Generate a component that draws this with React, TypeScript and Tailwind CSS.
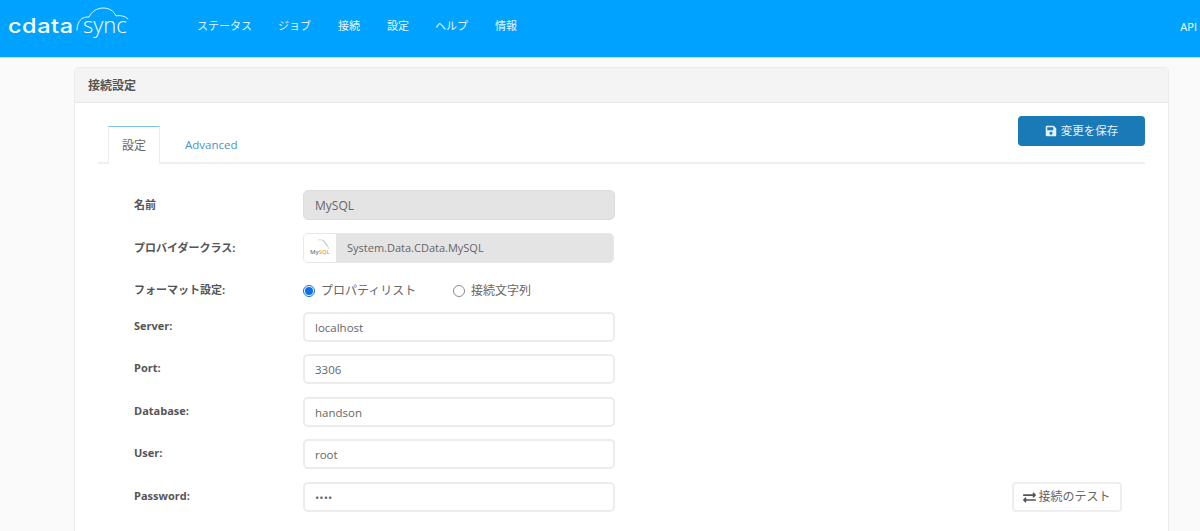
import { FaSave, FaExchangeAlt } from 'react-icons/fa';

const navItems = [
  { label: 'ステータス', w: 'w-[81px]' },
  { label: 'ジョブ', w: 'w-[60px]' },
  { label: '接続', w: 'w-[49px]' },
  { label: '設定', w: 'w-[48px]' },
  { label: 'ヘルプ', w: 'w-[60px]' },
  { label: '情報', w: 'w-[40px]' },
];

const font = 'font-["Open_Sans","Noto_Sans_CJK_JP",sans-serif]';

function Logo() {
  return (
    <div className="relative w-[130px] h-[40px] text-white">
      <span className="absolute left-[8px] top-[6px] text-[20px] leading-[34px] font-medium font-['Inter',sans-serif] tracking-[0.5px] scale-x-[1.17] origin-left">
        cdata
      </span>
      <span className="absolute left-[83px] top-[4px] text-[22px] leading-[34px] font-light font-['Open_Sans',sans-serif]">
        sync
      </span>
      <svg className="absolute left-[74px] top-[4px]" width="56" height="28" viewBox="0 0 56 28" fill="none" stroke="#fff" strokeWidth="1" strokeLinecap="round">
        <path d="M3 23c0-5 2-10 6-12 2-1 4-1 6-1 2-5 8-9 14-9 6 0 11 3 13 8 4-1 9 0 12 3" opacity="0.9" />
      </svg>
    </div>
  );
}

function Row({ label, value, type, className }: { label: string; value: string; type?: string; className?: string }) {
  return (
    <div className={`flex items-center ${className ?? ''}`}>
      <label className="w-[169px] text-[11px] font-bold text-[#555] -mt-[1px]">{label}</label>
      <input
        readOnly
        type={type ?? 'text'}
        value={value}
        className="w-[312px] h-[30px] px-[10px] rounded-[5px] border-2 border-[#ececec] bg-white text-[11.5px] text-[#666] outline-none"
      />
    </div>
  );
}

export default function App() {
  return (
    <div className={`w-[1200px] h-[531px] overflow-hidden bg-[#fafafa] ${font}`}>
      <header className="h-[58px] bg-[#00a2ff] border-b border-[#b5dff7] flex text-white">
        <div className="w-[197px] pt-[3px] shrink-0">
          <Logo />
        </div>
        <nav className="flex pt-[18px] text-[11px] leading-[16px] text-[#e6f6ff]">
          {navItems.map((n) => (
            <a key={n.label} className={n.w}>{n.label}</a>
          ))}
        </nav>
        <span className="ml-auto pt-[19px] pr-[3px] text-[11px] leading-[16px]">API</span>
      </header>

      <section className="ml-[74px] mt-[9px] w-[1095px] border border-[#ebebeb] rounded-t-[4px] bg-white">
        <h2 className="h-[35px] bg-[#f4f4f4] border-b border-[#e6e6e6] px-[13px] text-[12px] leading-[35px] font-bold text-[#555]">
          接続設定
        </h2>

        <div className="px-[23px] pt-[13px] relative">
          <button className="absolute right-[23px] top-[13px] w-[127px] h-[30px] rounded-[4px] bg-[#1a7ab8] text-[#e3f0f8] text-[11.5px] flex items-center justify-center gap-[4px]">
            <FaSave size={12} />
            変更を保存
          </button>

          <div className="flex h-[48px] items-end border-b-2 border-[#f0f0f0]">
            <div className="ml-[10px] w-[52px] h-[38px] -mb-[2px] border border-[#ececec] border-t-[#7cc4f0] border-b-white bg-white text-[12px] leading-[38px] text-center text-[#666]">
              設定
            </div>
            <div className="ml-[25px] h-[36px] text-[11.5px] leading-[38px] text-[#4a93c9]">Advanced</div>
          </div>

          <div className="pl-[36px] pt-[26px] pb-[20px] relative">
            <div className="flex items-center h-[30px]">
              <label className="w-[169px] text-[11px] font-bold text-[#555] mt-[1px]">名前</label>
              <div className="w-[312px] h-[30px] px-[11px] rounded-[5px] border border-[#dcdcdc] bg-[#e4e4e4] text-[12px] leading-[29px] text-[#666]">MySQL</div>
            </div>

            <div className="flex items-center h-[30px] mt-[13px]">
              <label className="w-[169px] text-[11px] font-bold text-[#555]">プロバイダークラス:</label>
              <div className="w-[311px] h-[30px] rounded-[5px] border border-[#e8e8e8] bg-[#e4e4e4] flex overflow-hidden">
                <div className="w-[32px] bg-white flex items-center justify-center relative shrink-0">
                  <span className="text-[6px] font-semibold text-[#6b7f92] mt-[7px] leading-none">My<span className="text-[#e8a04a]">SQL</span></span>
                  <svg className="absolute right-[5px] top-[4px]" width="14" height="12" viewBox="0 0 14 12" fill="none" stroke="#b5b5b5" strokeWidth="0.6">
                    <path d="M1 2c4-1 7 1 9 5l2 4M6 2l4 6" />
                  </svg>
                </div>
                <span className="pl-[11px] text-[11px] leading-[28px] text-[#666]">System.Data.CData.MySQL</span>
              </div>
            </div>

            <div className="flex items-center h-[30px] mt-[13px]">
              <label className="w-[169px] text-[11px] font-bold text-[#555] -mt-[2px]">フォーマット設定:</label>
              <div className="flex items-center text-[12px] text-[#666]">
                <span className="w-[12px] h-[12px] rounded-full border border-[#0a6fe8] bg-white flex items-center justify-center">
                  <span className="w-[8px] h-[8px] rounded-full bg-[#0a6fe8]" />
                </span>
                <span className="ml-[6px] w-[132px]">プロパティリスト</span>
                <span className="w-[12px] h-[12px] rounded-full border border-[#8a8a8a] bg-white" />
                <span className="ml-[6px]">接続文字列</span>
              </div>
            </div>

            <Row label="Server:" value="localhost" className="mt-[6px]" />
            <Row label="Port:" value="3306" className="mt-[12px]" />
            <Row label="Database:" value="handson" className="mt-[13px]" />
            <Row label="User:" value="root" className="mt-[12px]" />
            <Row label="Password:" value="pass" type="password" className="mt-[13px]" />

            <button className="absolute right-[23px] bottom-[20px] w-[110px] h-[30px] rounded-[4px] border-2 border-[#eeeeee] bg-white text-[12px] text-[#666] flex items-center justify-center gap-[2px]">
              <FaExchangeAlt size={13} className="text-[#555]" />
              接続のテスト
            </button>
          </div>
        </div>
      </section>
    </div>
  );
}
